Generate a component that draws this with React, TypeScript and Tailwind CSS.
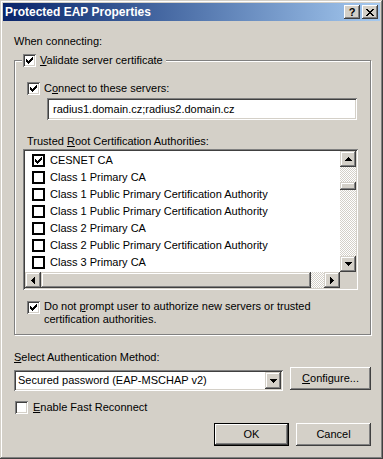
import React from 'react';

// classic 3D edges
const raised =
  'shadow-[inset_-1px_-1px_#404040,inset_1px_1px_#ffffff,inset_-2px_-2px_#808080,inset_2px_2px_#d4d0c8]';
const scrollBtn =
  'shadow-[inset_-1px_-1px_#404040,inset_1px_1px_#d4d0c8,inset_-2px_-2px_#808080,inset_2px_2px_#ffffff]';
const sunken =
  'shadow-[inset_1px_1px_#808080,inset_-1px_-1px_#ffffff,inset_2px_2px_#404040,inset_-2px_-2px_#d4d0c8]';
const checker =
  'bg-[image:repeating-conic-gradient(#d4d0c8_0_25%,#ffffff_0_50%)] bg-[length:2px_2px]';

const tick: [number, number, number][] = [
  [6, 0, 1], [5, 1, 2], [0, 2, 1], [4, 2, 3], [0, 3, 2], [3, 3, 3], [0, 4, 5], [1, 5, 3], [2, 6, 1],
];

const Tick = () => (
  <svg width="7" height="7" viewBox="0 0 7 7" shapeRendering="crispEdges">
    {tick.map(([x, y, w], i) => (
      <rect key={i} x={x} y={y} width={w} height={1} fill="#000" />
    ))}
  </svg>
);

const Check = ({ checked }: { checked?: boolean }) => (
  <span className={`w-[13px] h-[13px] shrink-0 bg-white flex items-center justify-center ${sunken}`}>
    {checked && <Tick />}
  </span>
);

const FlatCheck = ({ checked }: { checked?: boolean }) => (
  <span className="w-[13px] h-[13px] shrink-0 bg-white border-2 border-black flex items-center justify-center">
    {checked && <Tick />}
  </span>
);

const Arrow = ({ dir }: { dir: 'up' | 'down' | 'left' | 'right' }) => {
  const d = {
    up: 'M3 0h1v1h1v1h1v1h1v1H0V3h1V2h1V1h1z',
    down: 'M0 0h7v1H6v1H5v1H4v1H3V3H2V2H1V1H0z',
    left: 'M3 0h1v7H3V6H2V5H1V4H0V3h1V2h1V1h1z',
    right: 'M0 0h1v1h1v1h1v1h1v1H3v1H2v1H1v1H0z',
  }[dir];
  const vert = dir === 'up' || dir === 'down';
  return (
    <svg width={vert ? 7 : 4} height={vert ? 4 : 7} viewBox={vert ? '0 0 7 4' : '0 0 4 7'} shapeRendering="crispEdges">
      <path d={d} fill="#000" />
    </svg>
  );
};

const ScrollButton = ({ dir, className = '' }: { dir: 'up' | 'down' | 'left' | 'right'; className?: string }) => (
  <div className={`w-[16px] h-[16px] shrink-0 bg-[#d4d0c8] flex items-center justify-center ${scrollBtn} ${className}`}>
    <Arrow dir={dir} />
  </div>
);

const closeX: [number, number, number][] = [
  [0, 0, 2], [6, 0, 2], [1, 1, 2], [5, 1, 2], [2, 2, 4], [3, 3, 2], [2, 4, 4], [1, 5, 2], [5, 5, 2], [0, 6, 2], [6, 6, 2],
];

const authorities = [
  { name: 'CESNET CA', checked: true },
  { name: 'Class 1 Primary CA' },
  { name: 'Class 1 Public Primary Certification Authority' },
  { name: 'Class 1 Public Primary Certification Authority' },
  { name: 'Class 2 Primary CA' },
  { name: 'Class 2 Public Primary Certification Authority' },
  { name: 'Class 3 Primary CA' },
];

const TitleBar = () => (
  <div className="h-[18px] flex items-center justify-between pl-[2px] pr-[2px] bg-linear-to-r from-[#0a246a] to-[#a6caf0]">
    <span className="font-bold text-white text-[12px]">Protected EAP Properties</span>
    <div className="flex gap-[2px]">
      <div className={`w-[16px] h-[14px] bg-[#d4d0c8] flex items-center justify-center font-bold text-[11px] leading-none ${raised}`}>
        ?
      </div>
      <div className={`w-[16px] h-[14px] bg-[#d4d0c8] flex items-center justify-center ${raised}`}>
        <svg width="8" height="7" viewBox="0 0 8 7" shapeRendering="crispEdges">
          {closeX.map(([x, y, w], i) => (
            <rect key={i} x={x} y={y} width={w} height={1} fill="#000" />
          ))}
        </svg>
      </div>
    </div>
  </div>
);

const CertList = () => (
  <div className={`mt-[1px] w-[335px] h-[141px] bg-white p-[2px] flex flex-col ${sunken}`}>
    <div className="flex flex-1 min-h-0">
      <div className="flex-1 pt-[1px] pl-[7px] overflow-hidden">
        {authorities.map((a, i) => (
          <div key={i} className="h-[17px] flex items-center gap-[5px] whitespace-nowrap">
            <FlatCheck checked={a.checked} />
            <span>{a.name}</span>
          </div>
        ))}
      </div>
      {/* vertical scrollbar */}
      <div className={`w-[16px] flex flex-col ${checker}`}>
        <ScrollButton dir="up" />
        <div className={`mt-[15px] h-[8px] bg-[#d4d0c8] ${scrollBtn}`} />
        <div className="flex-1" />
        <ScrollButton dir="down" />
      </div>
    </div>
    {/* horizontal scrollbar */}
    <div className="flex h-[16px]">
      <div className={`flex-1 flex ${checker}`}>
        <ScrollButton dir="left" />
        <div className={`w-[270px] bg-[#d4d0c8] ${scrollBtn}`} />
        <div className="flex-1" />
        <ScrollButton dir="right" />
      </div>
      <div className="w-[16px] bg-[#d4d0c8]" />
    </div>
  </div>
);

const Button = ({ children, isDefault, className = '' }: { children: React.ReactNode; isDefault?: boolean; className?: string }) => (
  <div
    className={`h-[23px] bg-[#d4d0c8] flex items-center justify-center ${isDefault ? 'border border-black' : ''} ${className}`}
  >
    <div className={`w-full h-full flex items-center justify-center ${raised}`}>{children}</div>
  </div>
);

export default function App() {
  return (
    <div
      className={`w-[383px] h-[459px] bg-[#d4d0c8] p-[3px] font-['Liberation_Sans',Arial,sans-serif] text-[11px] leading-[13px] text-black select-none shadow-[inset_-1px_-1px_#404040,inset_1px_1px_#d4d0c8,inset_-2px_-2px_#808080,inset_2px_2px_#ffffff]`}
    >
      <TitleBar />
      <div className="ml-[11px] w-[357px]">
        <div className="mt-[14px] h-[13px]">When connecting:</div>

        <fieldset className="mt-[6px] w-[357px] border border-[#808080] shadow-[inset_1px_1px_#ffffff,1px_1px_#ffffff]">
          <legend className="ml-[7px] pl-[1px] pr-[3px] bg-[#d4d0c8] flex items-center gap-[4px] h-[13px]">
            <Check checked />
            <span>
              <span className="underline">V</span>alidate server certificate
            </span>
          </legend>

          <div className="pl-[8px] pb-[8px]">
            <div className="mt-[15px] ml-[4px] h-[13px] flex items-center gap-[4px]">
              <Check checked />
              <span>
                C<span className="underline">o</span>nnect to these servers:
              </span>
            </div>

            <div className={`mt-[3px] ml-[24px] w-[310px] h-[22px] bg-white flex items-center pl-[6px] ${sunken}`}>
              radius1.domain.cz;radius2.domain.cz
            </div>

            <div className="mt-[15px] ml-[4px] h-[13px]">
              Trusted <span className="underline">R</span>oot Certification Authorities:
            </div>

            <CertList />

            <div className="mt-[10px] ml-[4px] flex items-start gap-[4px]">
              <span className="mt-[1px]">
                <Check checked />
              </span>
              <span>
                Do not <span className="underline">p</span>rompt user to authorize new servers or trusted
                <br />
                certification authorities.
              </span>
            </div>
          </div>
        </fieldset>

        <div className="mt-[16px] h-[13px]">
          <span className="underline">S</span>elect Authentication Method:
        </div>

        <div className="mt-[3px] flex items-start justify-between">
          <div className={`mt-[3px] w-[269px] h-[21px] bg-white p-[2px] flex items-center ${sunken}`}>
            <span className="flex-1 pl-[2px] whitespace-nowrap">Secured password (EAP-MSCHAP v2)</span>
            <ScrollButton dir="down" className="h-[17px]" />
          </div>
          <Button className="w-[81px]">
            <span>
              <span className="underline">C</span>onfigure...
            </span>
          </Button>
        </div>

        <div className="mt-[10px] ml-[1px] h-[13px] flex items-center gap-[5px]">
          <Check />
          <span>
            <span className="underline">E</span>nable Fast Reconnect
          </span>
        </div>

        <div className="mt-[9px] flex justify-end gap-[7px]">
          <Button isDefault className="w-[75px]">
            OK
          </Button>
          <Button className="w-[75px]">Cancel</Button>
        </div>
      </div>
    </div>
  );
}
